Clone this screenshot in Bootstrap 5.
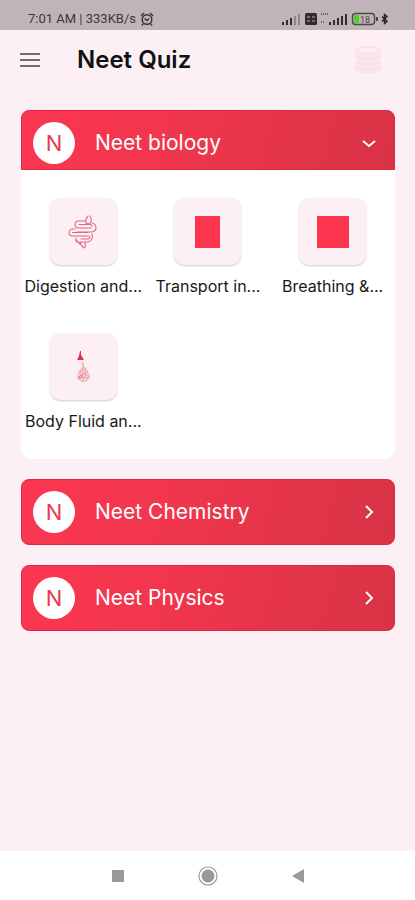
<!DOCTYPE html>
<html lang="en">
<head>
<meta charset="utf-8">
<meta name="viewport" content="width=device-width, initial-scale=1">
<title>Neet Quiz</title>
<link rel="stylesheet" href="https://cdn.jsdelivr.net/npm/bootstrap@5.3.0/dist/css/bootstrap.min.css">
<style>
body { background: #fdf0f4; font-family: Inter, "Liberation Sans", sans-serif; color: #111; }
svg { display: block; flex: none; }
.status { background: #bfb5b9; height: 30px; padding: 8px 26px 0 28px; font: 13px/22px Roboto, sans-serif; color: #3c373a; }
.topbar { height: 60px; padding: 0 31px 0 20px; gap: 37px; }
.topbar h1 { font-size: 24px; line-height: 30px; font-weight: 600; }
.icon-btn { background: none; border: 0; padding: 0; color: #716a6e; }
.topics { padding: 20px 20px 0 21px; gap: 20px; }
.subject { background: linear-gradient(105deg, #fb3650 0%, #f2364e 35%, #d83345 100%); border: 1px solid #dc2942; border-radius: 8px; color: #fff; height: 66px; padding: 0 15px 0 11px; gap: 20px; }
.subject.open { height: 60px; padding-top: 6px; border-radius: 8px 8px 0 0; }
.initial { width: 42px; height: 42px; background: #fff; color: #e93a50; font-size: 22px; line-height: 42px; border-radius: 50%; text-align: center; }
.subject-name { font-size: 21px; line-height: 28px; }
.panel { background: #fff; border-radius: 0 0 10px 10px; padding: 28px 0; row-gap: 37px; }
.topic { color: #181818; font-size: 16px; line-height: 20px; text-decoration: none; gap: 11px; }
.tile { width: 67px; height: 67px; background: #fdf0f4; border-radius: 10px; box-shadow: 0 1px 2px #0003; }
.sysnav { background: #fff; height: 49px; }
.sysnav .icon-btn { color: #999; width: 90px; }
</style>
<script src="https://cdn.jsdelivr.net/npm/bootstrap@5.3.0/dist/js/bootstrap.bundle.min.js"></script>
</head>
<body class="d-flex flex-column min-vh-100">
<div class="status d-flex">
  <span class="text-nowrap">7:01 AM | 333KB/s</span>
  <svg class="ms-1 mt-1" width="14" height="15" viewBox="0 0 14 15" fill="none" stroke="#353033" stroke-width="1.4"><circle cx="7" cy="7.500" r="4.800"/><path d="M1 4l3-3M13 4l-3-3M3 12l-1 1.500M11 12l1 1.500M4.500 6.500l2.500 2 2-2"/></svg>
  <svg class="ms-auto" width="108" height="18" viewBox="0 0 108 18">
    <g fill="#302b2e"><path d="M1 14h2v3H1zM5 12h2v5H5zM9 10h2v7H9z"/><path opacity=".35" d="M13 8h2v9h-2zM17 6h2v11h-2z"/><rect x="24" y="5" width="12" height="12" rx="1.500"/><path d="M48 14h2v3h-2zM52 12h2v5h-2zM56 10h2v7h-2zM60 8h2v9h-2zM64 6h2v11h-2z"/></g>
    <path d="M26 9h3M31 9h3M26 13h3M31 13h3" stroke="#bfb5b9"/>
    <path d="M40 6h3M44 6h4M40 14h4" stroke="#6e666a" stroke-width="2" stroke-dasharray="1 1"/>
    <rect x="71.500" y="5.500" width="22" height="11" rx="3" fill="none" stroke="#4b4648" stroke-width="1.400"/>
    <path d="M95 9h2v4h-2z" fill="#4b4648"/><rect x="73" y="7" width="5" height="8" rx="1.500" fill="#4bd323"/>
    <text x="79" y="14.500" font-size="9" font-family="Roboto, sans-serif" fill="#4b4648">18</text>
    <path d="M101 8.500l5 5-2.500 2V6.500l2.500 2-5 5" fill="none" stroke="#28232a" stroke-width="1.500"/>
  </svg>
</div>
<header class="topbar d-flex align-items-center">
  <button class="icon-btn" type="button" aria-label="Menu"><svg width="20" height="16" viewBox="0 0 20 16" fill="currentColor"><path d="M0 1h20v2H0zM0 7h20v2H0zM0 13h20v2H0z"/></svg></button>
  <h1 class="mb-0 flex-grow-1">Neet Quiz</h1>
  <svg width="32" height="30" viewBox="0 0 32 30" fill="#fce5ea" stroke="#fad9df"><path d="M3 4h26v7q-3 3 0 7v8q-13 5-26 0v-8q3-4 0-7z" stroke="none"/><ellipse cx="16" cy="5" rx="12" ry="3" fill="#fdf0f3"/><path d="M3 12q13 5 26 0M4 17q12 5 25 0M3 22q13 5 26 0" fill="none"/></svg>
</header>
<main class="topics d-flex flex-column flex-grow-1">
  <section>
    <button class="subject open w-100 d-flex align-items-center" type="button" data-bs-toggle="collapse" data-bs-target="#biology" aria-expanded="true" aria-controls="biology">
      <span class="initial">N</span><span class="subject-name">Neet biology</span>
      <svg class="ms-auto" width="20" height="20" viewBox="0 0 20 20" fill="none" stroke="#fff" stroke-width="2"><path d="M4 8l6 5 6-5"/></svg>
    </button>
    <div class="collapse show" id="biology">
      <div class="panel row g-0 row-cols-3">
        <div class="col"><a href="#digestion" class="topic d-flex flex-column align-items-center">
          <span class="tile d-flex align-items-center justify-content-center"><svg width="30" height="34" viewBox="0 0 30 34" fill="none" stroke="#e0677d" stroke-width="1.100" stroke-linecap="round" stroke-linejoin="round"><path d="M20 1q-3 3-2 7 3 2 5-1 1-3-1-6M17 6H11q-4 0-4 3.500T11 13h12M24 8q4 1 4 4.500T24 17H9M7 14H4.500a3.500 3.500 0 0 0 0 7H20q2 0 2 1.500T20 24h-7M4.500 17.500H20M11 9.500h11q2 0 2 2M24 19q2 6-4 8h-7M8 23q-1 4 3 4.500M12 27q1 4 4 6 2-1 1-5M8 25l4 4"/></svg></span>
          <span class="text-nowrap">Digestion and...</span></a></div>
        <div class="col"><a href="#transport" class="topic d-flex flex-column align-items-center">
          <span class="tile d-flex align-items-center justify-content-center"><svg width="25" height="32" viewBox="0 0 25 32"><path d="M0 0h25v32H0z" fill="#fc354e"/></svg></span>
          <span class="text-nowrap">Transport in...</span></a></div>
        <div class="col"><a href="#breathing" class="topic d-flex flex-column align-items-center">
          <span class="tile d-flex align-items-center justify-content-center"><svg width="32" height="32" viewBox="0 0 32 32"><path d="M0 0h32v32H0z" fill="#fc354e"/></svg></span>
          <span class="text-nowrap">Breathing &amp;...</span></a></div>
        <div class="col"><a href="#fluid" class="topic d-flex flex-column align-items-center">
          <span class="tile d-flex align-items-center justify-content-center"><svg width="20" height="34" viewBox="0 0 20 34"><path d="M7 1h1v4l3 5H4l2-4z" fill="#e32f45"/><path d="M9 12q0 5-3 8-4 5-1 10 5 5 11 0 3-4-2-10-4-3-4-8z" fill="#f8d2da"/><path d="M10 13l1 5-4 3 5 3-6 3 5 1-1 4M12 18l3 4-3 3 4 1-3 5M6 22l2 3-3 2 4 3M9 18l4 4-5 4 7 2M5 29l5-2" fill="none" stroke="#dc8293" stroke-width=".9" stroke-dasharray="2 1"/></svg></span>
          <span class="text-nowrap">Body Fluid an...</span></a></div>
      </div>
    </div>
  </section>
  <button class="subject w-100 d-flex align-items-center" type="button">
    <span class="initial">N</span><span class="subject-name">Neet Chemistry</span>
    <svg class="ms-auto" width="20" height="20" viewBox="0 0 20 20" fill="none" stroke="#fff" stroke-width="2"><path d="M7 4l6 6-6 6"/></svg>
  </button>
  <button class="subject w-100 d-flex align-items-center" type="button">
    <span class="initial">N</span><span class="subject-name">Neet Physics</span>
    <svg class="ms-auto" width="20" height="20" viewBox="0 0 20 20" fill="none" stroke="#fff" stroke-width="2"><path d="M7 4l6 6-6 6"/></svg>
  </button>
</main>
<nav class="sysnav d-flex align-items-center justify-content-center" aria-label="System">
  <button class="icon-btn d-flex justify-content-center" type="button" aria-label="Recent apps"><svg width="20" height="20" viewBox="0 0 20 20" fill="currentColor"><path d="M4 4h12v12H4z"/></svg></button>
  <button class="icon-btn d-flex justify-content-center" type="button" aria-label="Home"><svg width="20" height="20" viewBox="0 0 20 20" fill="currentColor"><circle cx="10" cy="10" r="6.500"/><circle cx="10" cy="10" r="9" fill="none" stroke="currentColor" stroke-width="1.200"/></svg></button>
  <button class="icon-btn d-flex justify-content-center" type="button" aria-label="Back"><svg width="20" height="20" viewBox="0 0 20 20" fill="currentColor"><path d="M4 10l12-7v14z"/></svg></button>
</nav>
</body>
</html>
